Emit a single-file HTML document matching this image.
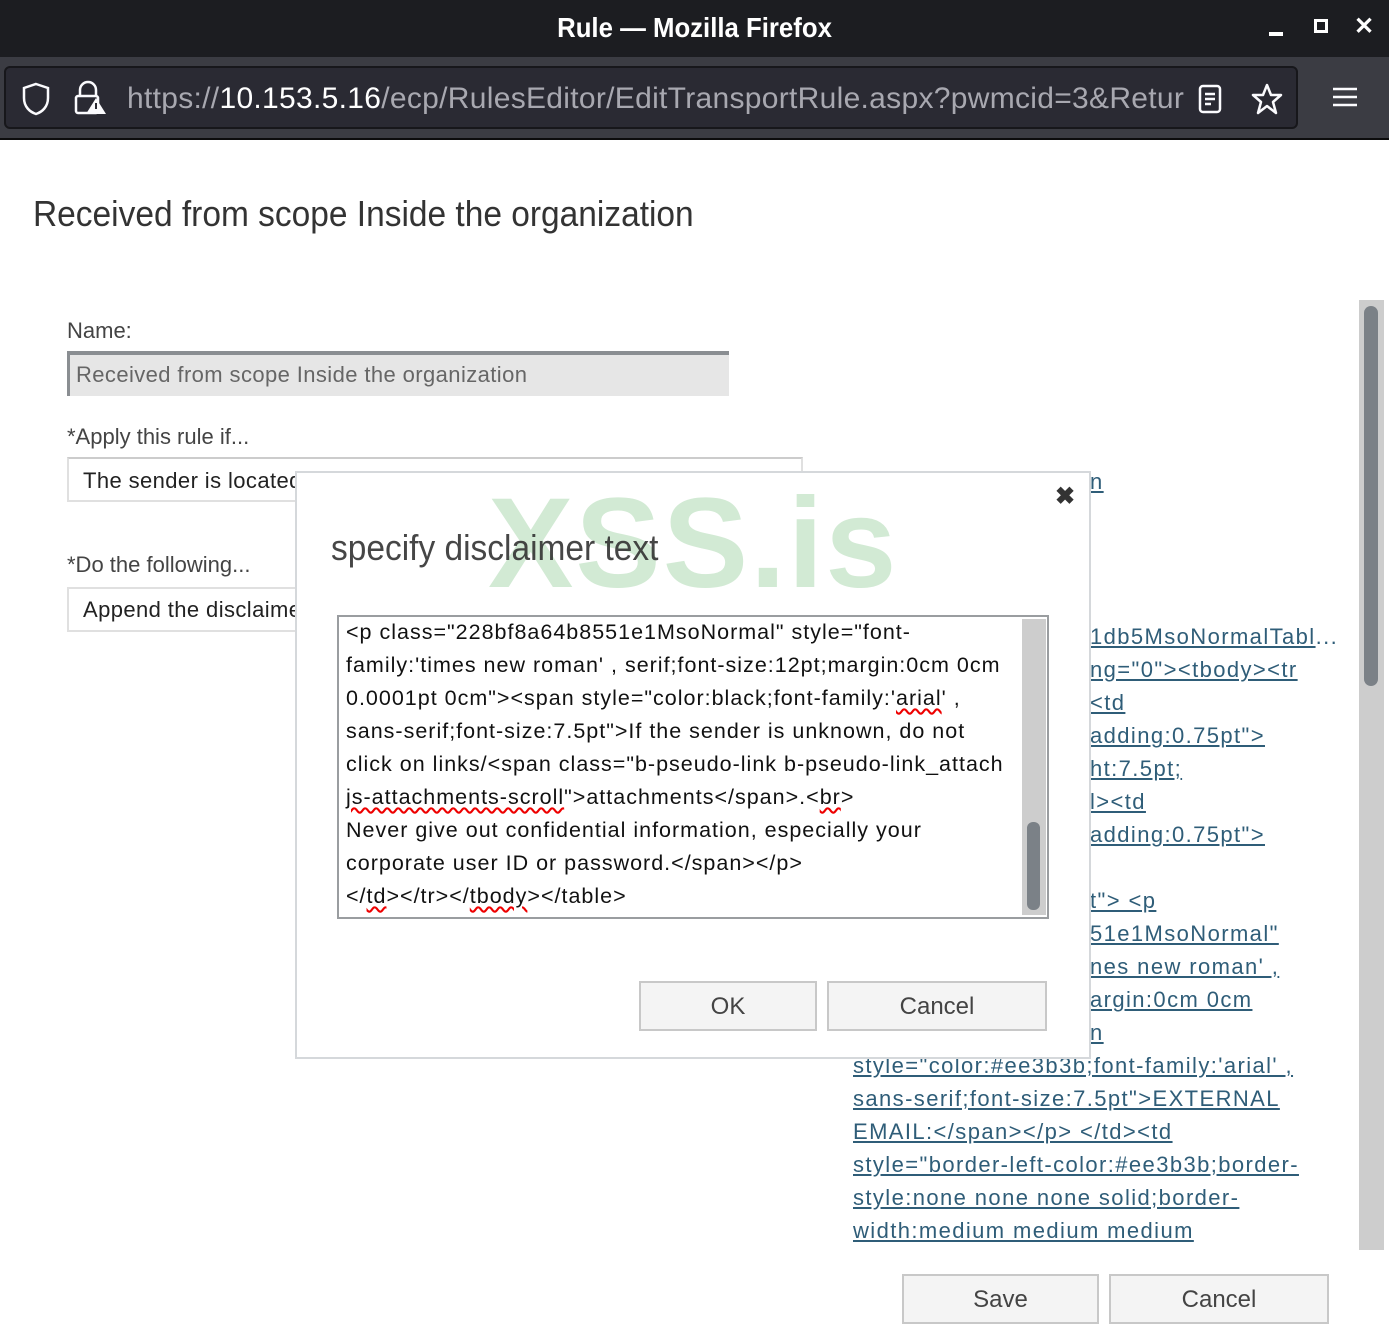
<!DOCTYPE html>
<html><head><meta charset="utf-8"><style>
*{margin:0;padding:0;box-sizing:border-box}
body{width:1389px;height:1335px;overflow:hidden;background:#fff;font-family:"Liberation Sans",sans-serif;position:relative;color:#333}
.a{position:absolute;white-space:nowrap}
.lnk{color:#2f5d78;text-decoration:underline;font-size:22px;left:853px;letter-spacing:1.4px}
.ta{font-size:21.5px;color:#111;line-height:33px;letter-spacing:1px}
.sq{text-decoration:underline wavy #e00;text-underline-offset:3px}
.btn{position:absolute;border:2px solid #c8c8c8;background:#f4f4f4;color:#444;font-size:24px;text-align:center}
</style></head><body>
<div class="a" style="left:0;top:0;width:1389px;height:57px;background:#1c1d21"></div>
<div class="a" style="left:0;top:12px;width:1389px;text-align:center;color:#fff;font-size:28px;font-weight:bold;transform:scaleX(.92)">Rule — Mozilla Firefox</div>
<div class="a" style="left:1269px;top:32px;width:14px;height:4px;background:#fff"></div>
<div class="a" style="left:1314px;top:19px;width:14px;height:14px;border:3px solid #fff"></div>
<div class="a" style="left:1354px;top:12px;color:#fff;font-size:24px;font-weight:bold">✕</div>
<div class="a" style="left:0;top:57px;width:1389px;height:83px;background:#3b3c43"></div>
<div class="a" style="left:0;top:138px;width:1389px;height:2px;background:#0c0c0d"></div>
<div class="a" style="left:4px;top:66px;width:1294px;height:63px;background:#2a2a33;border:2px solid #17171b;border-radius:6px"></div>
<svg class="a" style="left:20px;top:82px" width="32" height="34" viewBox="0 0 32 34"><path d="M16 2 L28 6 V16 C28 25 22 30 16 32 C10 30 4 25 4 16 V6 Z" fill="none" stroke="#fbfbfe" stroke-width="2.5"/></svg>
<svg class="a" style="left:72px;top:80px" width="36" height="36" viewBox="0 0 36 36"><path d="M8 16 V10 a8 8 0 0 1 16 0 V16" fill="none" stroke="#fbfbfe" stroke-width="2.5"/><rect x="4" y="16" width="22" height="17" rx="2" fill="none" stroke="#fbfbfe" stroke-width="2.5"/><path d="M24 18 L34 34 H14 Z" fill="#fbfbfe"/><rect x="23" y="23" width="2" height="6" fill="#2a2a33"/></svg>
<div class="a" style="left:127px;top:82px;font-size:30px;color:#a8a8b0;letter-spacing:.3px;width:1057px;overflow:hidden">https://<span style="color:#fff">10.153.5.16</span>/ecp/RulesEditor/EditTransportRule.aspx?pwmcid=3&amp;ReturnObjectType=1</div>
<svg class="a" style="left:1198px;top:84px" width="26" height="30"><rect x="2" y="2" width="20" height="26" rx="3" fill="none" stroke="#fbfbfe" stroke-width="2.5"/><path d="M7 10h10M7 15h10M7 20h6" stroke="#fbfbfe" stroke-width="2.5"/></svg>
<svg class="a" style="left:1250px;top:82px" width="34" height="34" viewBox="0 0 34 34"><path d="M17 3 L21 13 L31 13 L23 20 L26 31 L17 24 L8 31 L11 20 L3 13 L13 13 Z" fill="none" stroke="#fbfbfe" stroke-width="2.5" stroke-linejoin="round"/></svg>
<svg class="a" style="left:1332px;top:86px" width="26" height="24"><path d="M1 3h24M1 11h24M1 19h24" stroke="#fbfbfe" stroke-width="2.5"/></svg>

<div class="a" style="left:33px;top:193px;font-size:36px;color:#333;font-weight:300;transform-origin:left;transform:scaleX(.93)">Received from scope Inside the organization</div>
<div class="a" style="left:67px;top:318px;font-size:22px;color:#444">Name:</div>
<div class="a" style="left:67px;top:351px;width:662px;height:45px;background:#e6e6e6;border-top:4px solid #8a8e92;border-left:3px solid #8a8e92"></div>
<div class="a" style="left:76px;top:362px;font-size:22px;color:#666;letter-spacing:.4px">Received from scope Inside the organization</div>
<div class="a" style="left:67px;top:424px;font-size:22px;color:#444">*Apply this rule if...</div>
<div class="a" style="left:67px;top:457px;width:736px;height:45px;border:2px solid #e0e0e0;border-top-color:#ccc"></div>
<div class="a" style="left:83px;top:468px;font-size:22px;color:#222;letter-spacing:.4px">The sender is located</div>
<div class="a" style="left:67px;top:552px;font-size:22px;color:#444">*Do the following...</div>
<div class="a" style="left:67px;top:587px;width:240px;height:45px;border:2px solid #e0e0e0"></div>
<div class="a" style="left:83px;top:597px;font-size:22px;color:#222;letter-spacing:.4px">Append the disclaimer</div>

<div class="a lnk" style="left:1090px;top:469px">n</div>
<div class="a lnk" style="left:1090px;top:624px;text-decoration:none"><u>1db5MsoNormalTabl</u>...</div>
<div class="a lnk" style="left:1090px;top:657px">ng="0"&gt;&lt;tbody&gt;&lt;tr</div>
<div class="a lnk" style="left:1090px;top:690px">&lt;td</div>
<div class="a lnk" style="left:1090px;top:723px">adding:0.75pt"&gt;</div>
<div class="a lnk" style="left:1090px;top:756px">ht:7.5pt;</div>
<div class="a lnk" style="left:1090px;top:789px">l&gt;&lt;td</div>
<div class="a lnk" style="left:1090px;top:822px">adding:0.75pt"&gt;</div>
<div class="a lnk" style="left:1090px;top:888px">t"&gt; &lt;p</div>
<div class="a lnk" style="left:1090px;top:921px">51e1MsoNormal"</div>
<div class="a lnk" style="left:1090px;top:954px">nes new roman' ,</div>
<div class="a lnk" style="left:1090px;top:987px">argin:0cm 0cm</div>
<div class="a lnk" style="left:1090px;top:1020px">n</div>
<div class="a lnk" style="top:1053px">style="color:#ee3b3b;font-family:'arial' ,</div>
<div class="a lnk" style="top:1086px">sans-serif;font-size:7.5pt"&gt;EXTERNAL</div>
<div class="a lnk" style="top:1119px">EMAIL:&lt;/span&gt;&lt;/p&gt; &lt;/td&gt;&lt;td</div>
<div class="a lnk" style="top:1152px">style="border-left-color:#ee3b3b;border-</div>
<div class="a lnk" style="top:1185px">style:none none none solid;border-</div>
<div class="a lnk" style="top:1218px">width:medium medium medium</div>

<div class="a" style="left:1359px;top:300px;width:25px;height:950px;background:#cdcdcd"></div>
<div class="a" style="left:1364px;top:306px;width:14px;height:380px;background:#7b8187;border-radius:7px"></div>

<div class="btn" style="left:902px;top:1274px;width:197px;height:50px;line-height:48px">Save</div>
<div class="btn" style="left:1109px;top:1274px;width:220px;height:50px;line-height:48px">Cancel</div>

<div class="a" style="left:295px;top:471px;width:796px;height:588px;background:#fff;border:2px solid #d5d8db"></div>
<div class="a" style="left:488px;top:470px;font-size:128px;font-weight:bold;color:#d2ead4;letter-spacing:2px">XSS.is</div>
<div class="a" style="left:1055px;top:482px;font-size:24px;font-weight:bold;color:#333">✖</div>
<div class="a" style="left:331px;top:527px;font-size:36px;color:#333;font-weight:300;transform-origin:left;transform:scaleX(.93);opacity:.9">specify disclaimer text</div>
<div class="a" style="left:337px;top:615px;width:712px;height:304px;border:2px solid #9a9da0;background:transparent"></div>
<div class="a" style="left:1022px;top:619px;width:24px;height:296px;background:#cdcdcd"></div>
<div class="a" style="left:1027px;top:822px;width:13px;height:88px;background:#7b8187;border-radius:6px"></div>
<div class="a ta" style="left:346px;top:616px">&lt;p class="228bf8a64b8551e1MsoNormal" style="font-<br>family:'times new roman' , serif;font-size:12pt;margin:0cm 0cm<br>0.0001pt 0cm"&gt;&lt;span style="color:black;font-family:'<span class="sq">arial</span>' ,<br>sans-serif;font-size:7.5pt"&gt;If the sender is unknown, do not<br>click on links/&lt;span class="b-pseudo-link b-pseudo-link_attach<br><span class="sq">js-attachments-scroll</span>"&gt;attachments&lt;/span&gt;.&lt;<span class="sq">br</span>&gt;<br>Never give out confidential information, especially your<br>corporate user ID or password.&lt;/span&gt;&lt;/p&gt;<br>&lt;/<span class="sq">td</span>&gt;&lt;/tr&gt;&lt;/<span class="sq">tbody</span>&gt;&lt;/table&gt;</div>
<div class="btn" style="left:639px;top:981px;width:178px;height:50px;line-height:48px">OK</div>
<div class="btn" style="left:827px;top:981px;width:220px;height:50px;line-height:48px">Cancel</div>
</body></html>
